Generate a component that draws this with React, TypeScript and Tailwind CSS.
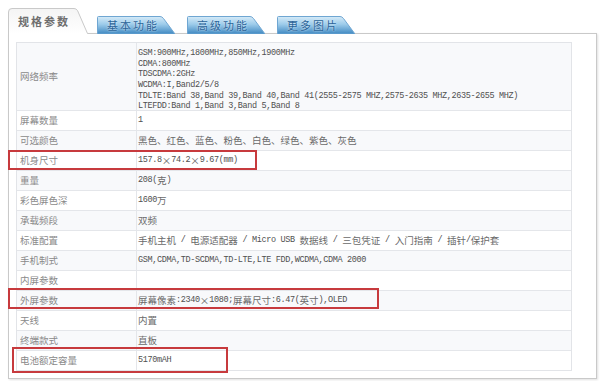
import React from 'react';

// half-width latin runs get a mono face so they sit at ~half a CJK cell
const Mixed: React.FC<{ text: string }> = ({ text }) => (
  <>
    {text.split(/([\x00-\x7F]+)/).map((s, i) =>
      /^[\x00-\x7F]+$/.test(s) ? (
        <span key={i} className="font-['Liberation_Mono',monospace] text-[8.5px] tracking-[-0.35px] text-[#505050] whitespace-pre">
          {s}
        </span>
      ) : (
        <span key={i}>{s}</span>
      )
    )}
  </>
);

const network = [
  'GSM:900MHz,1800MHz,850MHz,1900MHz',
  'CDMA:800MHz',
  'TDSCDMA:2GHz',
  'WCDMA:I,Band2/5/8',
  'TDLTE:Band 38,Band 39,Band 40,Band 41(2555-2575 MHZ,2575-2635 MHZ,2635-2655 MHZ)',
  'LTEFDD:Band 1,Band 3,Band 5,Band 8',
];

const rows: [string, string][] = [
  ['屏幕数量', '1'],
  ['可选颜色', '黑色、红色、蓝色、粉色、白色、绿色、紫色、灰色'],
  ['机身尺寸', '157.8×74.2×9.67(mm)'],
  ['重量', '208(克)'],
  ['彩色屏色深', '1600万'],
  ['承载频段', '双频'],
  ['标准配置', '手机主机 / 电源适配器 / Micro USB 数据线 / 三包凭证 / 入门指南 / 插针/保护套'],
  ['手机制式', 'GSM,CDMA,TD-SCDMA,TD-LTE,LTE FDD,WCDMA,CDMA 2000'],
  ['内屏参数', ''],
  ['外屏参数', '屏幕像素:2340×1080;屏幕尺寸:6.47(英寸),OLED'],
  ['天线', '内置'],
  ['终端款式', '直板'],
  ['电池额定容量', '5170mAH'],
];

const BlueTab: React.FC<{ label: string; id: string; className?: string }> = ({ label, id, className }) => (
  <div className={`relative w-[78px] h-[18px] flex items-center pl-[10px] ${className ?? ''}`}>
    <svg className="absolute inset-0" width="78" height="18" viewBox="0 0 78 18">
      <defs>
        <linearGradient id={id} x1="0" y1="0" x2="0" y2="1">
          <stop offset="0" stopColor="#d6ebf8" />
          <stop offset="0.45" stopColor="#9ccbea" />
          <stop offset="1" stopColor="#3f88c1" />
        </linearGradient>
      </defs>
      <path d="M0.5 18 L0.5 1.5 Q0.5 0.5 1.5 0.5 L63 0.5 Q65 0.5 66.5 2.5 L78 18 Z" fill={`url(#${id})`} stroke="#6fa6d2" strokeWidth="1" />
    </svg>
    <span className="relative text-[11px] tracking-[2px] text-[#2a6398] [text-shadow:0_0_2px_#e8f4fc]">
      {label}
    </span>
  </div>
);

export default function App() {
  return (
    <div className="relative w-[600px] h-[381px] bg-white px-2 pt-2 font-['Noto_Sans_CJK_SC','Liberation_Sans',sans-serif] overflow-hidden">
      {/* tabs */}
      <div className="flex items-end -mb-px relative z-10">
        <div className="relative w-[80px] h-[26px] flex items-center pl-[10px]">
          <svg className="absolute inset-0" width="80" height="26" viewBox="0 0 80 26">
            <defs>
              <linearGradient id="act" x1="0" y1="0" x2="0" y2="1">
                <stop offset="0" stopColor="#f4f4f4" />
                <stop offset="1" stopColor="#ffffff" />
              </linearGradient>
            </defs>
            <path d="M0 26 L0 4 Q0 0 4 0 L66 0 Q68 0 69.5 2 L80 26 Z" fill="url(#act)" />
            <path d="M0.5 26 L0.5 4 Q0.5 0.5 4 0.5 L66 0.5 Q68 0.5 69.5 2.5 L79.5 25.5 L80 25.5" fill="none" stroke="#c9c9c9" strokeWidth="1" />
          </svg>
          <span className="relative text-[11px] font-bold tracking-[2px] text-[#6e6e6e]">规格参数</span>
        </div>
        <BlueTab label="基本功能" id="t1" className="ml-[9px]" />
        <BlueTab label="高级功能" id="t2" className="ml-[12px]" />
        <BlueTab label="更多图片" id="t3" className="ml-[12px]" />
      </div>

      {/* panel */}
      <div className="w-[589px] border border-[#c9c9c9] pl-[7px] pt-[8px] pb-[7px] shadow-[1px_1px_2px_rgba(0,0,0,0.12)]">
        <div className="w-[556px] border border-[#e2e4e8] text-[9.5px] leading-[10.7px]">
          <div className="flex h-[67px] bg-[#f8f9fb]">
            <div className="w-[120px] shrink-0 border-r border-[#e4e6ea] pl-[3px] flex items-center text-[#8a8a8a]">网络频率</div>
            <div className="pl-[1px] pt-[3px] text-[#6a6a6a]">
              {network.map(l => (
                <div key={l} className="h-[10.7px]">
                  <Mixed text={l} />
                </div>
              ))}
            </div>
          </div>
          {rows.map(([k, v], i) => (
            <div
              key={k}
              className={`flex h-[20px] border-t border-[#e4e6ea] ${i % 2 === 0 ? 'bg-white' : 'bg-[#f8f9fb]'}`}
            >
              <div className="w-[120px] shrink-0 border-r border-[#e4e6ea] pl-[3px] flex items-center text-[#8a8a8a]">{k}</div>
              <div className="pl-[1px] flex items-center text-[#6a6a6a] whitespace-nowrap">
                <Mixed text={v} />
              </div>
            </div>
          ))}
        </div>
      </div>

      {/* highlight boxes */}
      <div className="absolute left-[8px] top-[150px] w-[249px] h-[20px] border-2 border-[#c73a3d]" />
      <div className="absolute left-[8px] top-[288px] w-[371px] h-[21px] border-2 border-[#c73a3d]" />
      <div className="absolute left-[12px] top-[347px] w-[216px] h-[26px] border-2 border-[#c73a3d]" />
    </div>
  );
}
